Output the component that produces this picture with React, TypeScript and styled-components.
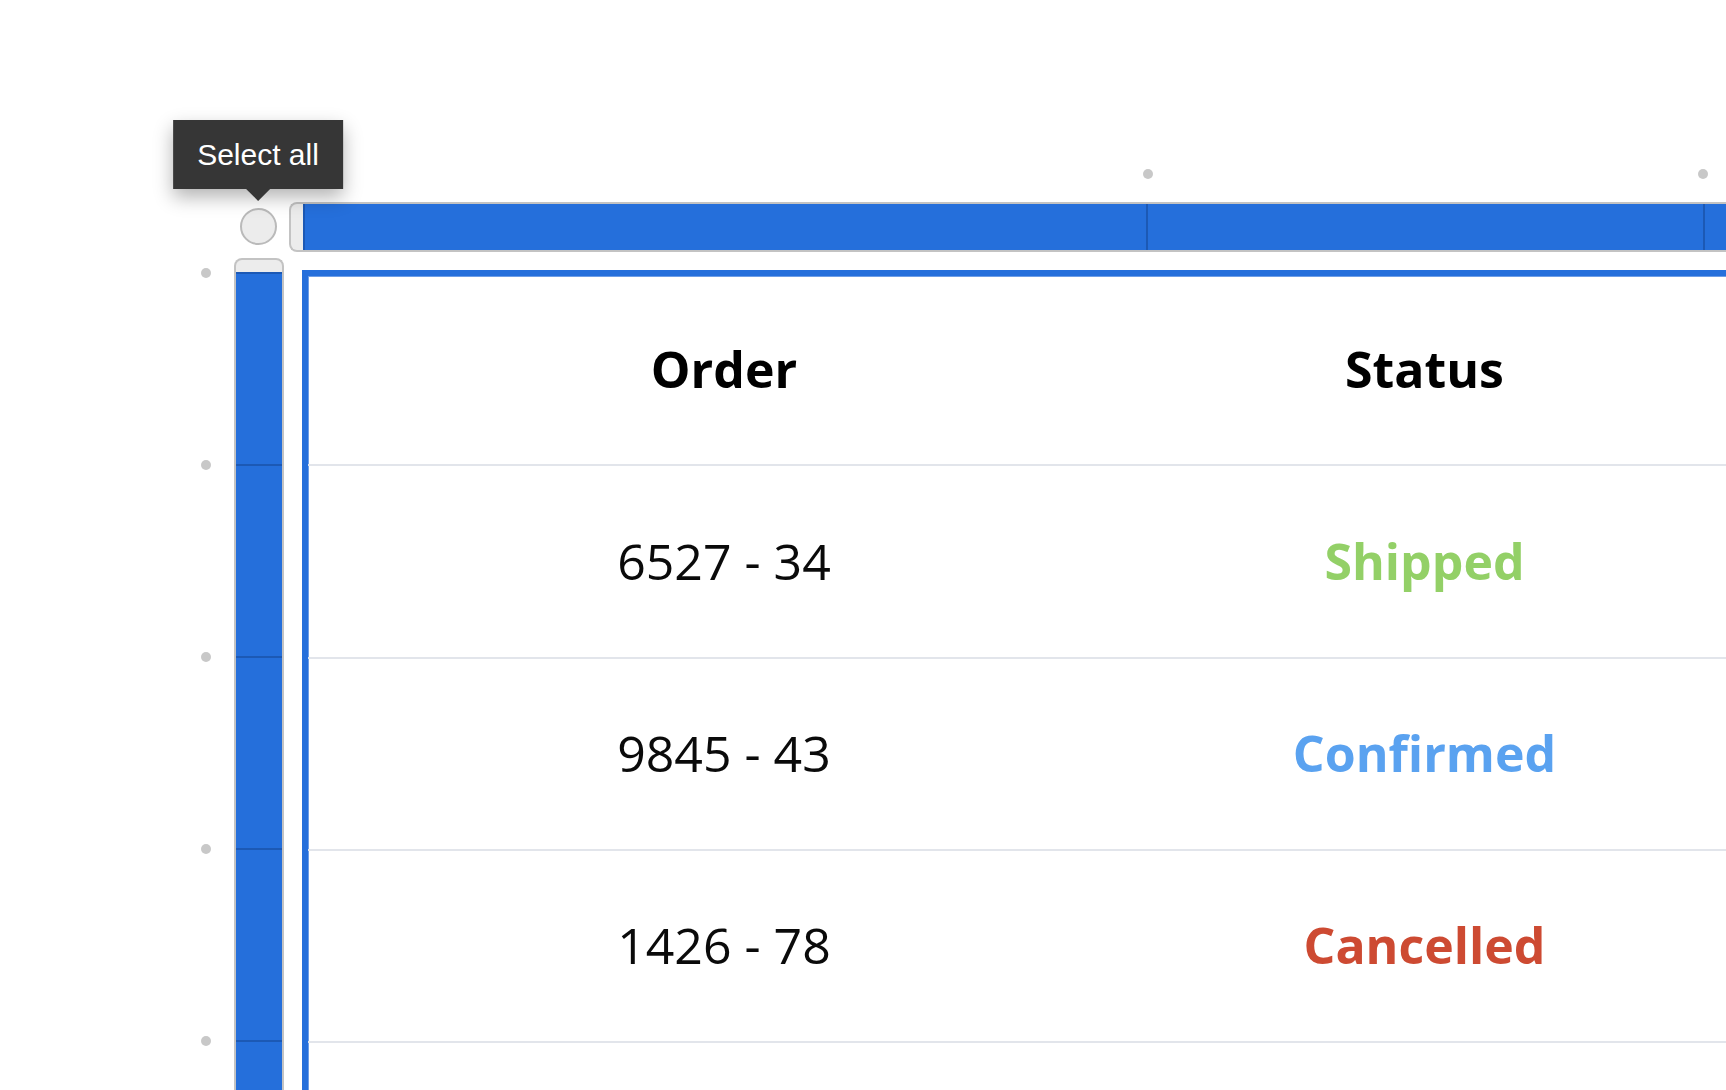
import React from "react";
import styled, { createGlobalStyle } from "styled-components";

const BLUE = "#256fdb";
const DARK_BLUE = "#1c59b5";
const RAIL_BORDER = "#c3c3c3";
const RAIL_CAP = "#ececec";
const HANDLE = "#c8c8c8";
const ROW_LINE = "#e2e5eb";

const GlobalStyle = createGlobalStyle`
  html, body {
    margin: 0;
    padding: 0;
    background: #ffffff;
  }
  body {
    width: 1726px;
    height: 1090px;
    overflow: hidden;
    font-family: "Open Sans", "Noto Sans", sans-serif;
  }
  * { box-sizing: border-box; }
`;

const Editor = styled.div`
  display: grid;
  grid-template-columns: 234px 50px 5px 1fr;
  grid-template-rows: 202px 50px 6px 1fr;
  width: 1726px;
  height: 1090px;
  overflow: hidden;
`;

const Dot = styled.span`
  display: block;
  width: 10px;
  height: 10px;
  border-radius: 50%;
  background: ${HANDLE};
`;

const TopHandles = styled.div`
  grid-column: 4;
  grid-row: 1;
  align-self: end;
  margin-bottom: 23px;
  display: flex;
  padding-left: 14px;
`;

const HandleSlot = styled.div<{ $w?: number }>`
  flex: ${(p) => (p.$w ? `0 0 ${p.$w}px` : "1 1 auto")};
  display: flex;
  & > ${Dot} {
    margin-left: -5px;
  }
`;

const LeftHandles = styled.div`
  grid-column: 1;
  grid-row: 4;
  justify-self: end;
  margin-right: 23px;
  padding-top: 10px;
  display: flex;
  flex-direction: column;
  gap: 182px;
`;

const SelectAll = styled.div`
  grid-column: 2;
  grid-row: 2;
  place-self: center;
  margin: 0 2px 2px 0;
  position: relative;
  width: 37px;
  height: 37px;
  border-radius: 50%;
  border: 2px solid #bababa;
  background: ${RAIL_CAP};
`;

const Tooltip = styled.div`
  position: absolute;
  bottom: calc(100% + 21px);
  left: 50%;
  transform: translateX(-50%);
  height: 69px;
  padding: 0 24px;
  background: #363636;
  color: #ffffff;
  font-family: "Liberation Sans", Arial, sans-serif;
  font-size: 30px;
  line-height: 69px;
  white-space: nowrap;
  box-shadow: 0 8px 18px rgba(0, 0, 0, 0.3);

  &::after {
    content: "";
    position: absolute;
    top: 100%;
    left: 50%;
    transform: translateX(-50%);
    border-left: 12px solid transparent;
    border-right: 12px solid transparent;
    border-top: 12px solid #363636;
  }
`;

const ColumnRail = styled.div`
  grid-column: 4;
  grid-row: 2;
  display: flex;
  border: 2px solid ${RAIL_BORDER};
  border-right: none;
  border-radius: 8px 0 0 8px;
  background: ${RAIL_CAP};
  padding-left: 12px;
  overflow: hidden;
`;

const ColumnSegment = styled.div<{ $w?: number }>`
  flex: ${(p) => (p.$w ? `0 0 ${p.$w}px` : "1 1 auto")};
  background: ${BLUE};
  border-left: 2px solid ${DARK_BLUE};
`;

const RowRail = styled.div`
  grid-column: 2;
  grid-row: 4;
  display: flex;
  flex-direction: column;
  border: 2px solid ${RAIL_BORDER};
  border-bottom: none;
  border-radius: 8px 8px 0 0;
  background: ${RAIL_CAP};
  padding-top: 12px;
  overflow: hidden;
`;

const RowSegment = styled.div`
  flex: 0 0 192px;
  background: ${BLUE};
  border-top: 2px solid ${DARK_BLUE};
`;

const Canvas = styled.div`
  grid-column: 4;
  grid-row: 4;
  padding: 12px 0 0 13px;
`;

const Table = styled.div`
  display: grid;
  grid-template-columns: 832px 569px 600px;
  align-content: start;
  width: max-content;
  min-height: 1000px;
  border: 6px solid ${BLUE};
  box-shadow: inset 0 0 0 1px #6d9de6;
`;

type Tone = "plain" | "head" | "shipped" | "confirmed" | "cancelled";

const toneColor: Record<Tone, string> = {
  plain: "#0a0a0a",
  head: "#000000",
  shipped: "#93d067",
  confirmed: "#5aa2f0",
  cancelled: "#cd4a32",
};

const Cell = styled.div<{ $h: number; $tone?: Tone }>`
  height: ${(p) => p.$h}px;
  display: flex;
  align-items: center;
  justify-content: center;
  padding-bottom: 2px;
  border-bottom: 2px solid ${ROW_LINE};
  font-size: 50px;
  font-weight: ${(p) => (p.$tone && p.$tone !== "plain" ? 700 : 400)};
  color: ${(p) => toneColor[p.$tone ?? "plain"]};
  white-space: nowrap;
`;

const HEADER_H = 190;

const rows: { order: string; status: string; tone: Tone; h: number }[] = [
  { order: "6527 - 34", status: "Shipped", tone: "shipped", h: 193 },
  { order: "9845 - 43", status: "Confirmed", tone: "confirmed", h: 192 },
  { order: "1426 - 78", status: "Cancelled", tone: "cancelled", h: 192 },
];

export default function App() {
  return (
    <>
      <GlobalStyle />
      <Editor>
        <TopHandles>
          <HandleSlot $w={845}>
            <Dot />
          </HandleSlot>
          <HandleSlot $w={555}>
            <Dot />
          </HandleSlot>
          <HandleSlot>
            <Dot />
          </HandleSlot>
        </TopHandles>

        <SelectAll>
          <Tooltip>Select all</Tooltip>
        </SelectAll>

        <ColumnRail>
          <ColumnSegment $w={843} />
          <ColumnSegment $w={557} />
          <ColumnSegment />
        </ColumnRail>

        <LeftHandles>
          <Dot />
          <Dot />
          <Dot />
          <Dot />
          <Dot />
        </LeftHandles>

        <RowRail>
          <RowSegment />
          <RowSegment />
          <RowSegment />
          <RowSegment />
          <RowSegment />
        </RowRail>

        <Canvas>
          <Table>
            <Cell $h={HEADER_H} $tone="head">Order</Cell>
            <Cell $h={HEADER_H} $tone="head">Status</Cell>
            <Cell $h={HEADER_H} />
            {rows.map((r) => (
              <React.Fragment key={r.order}>
                <Cell $h={r.h}>{r.order}</Cell>
                <Cell $h={r.h} $tone={r.tone}>{r.status}</Cell>
                <Cell $h={r.h} />
              </React.Fragment>
            ))}
          </Table>
        </Canvas>
      </Editor>
    </>
  );
}
